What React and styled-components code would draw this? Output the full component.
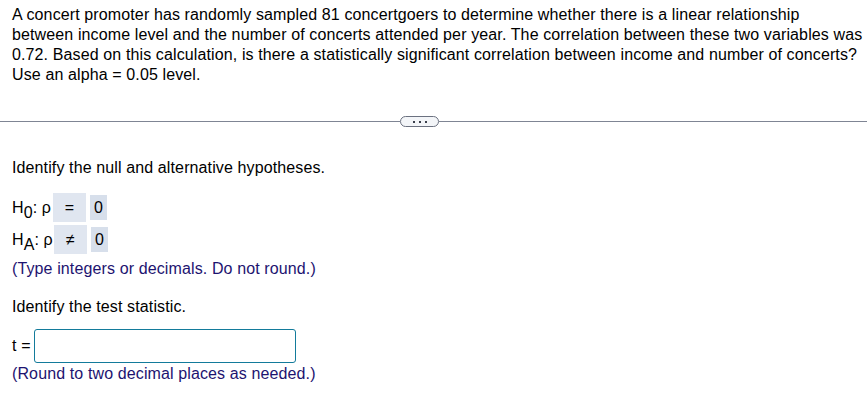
import React from "react";
import styled, { createGlobalStyle } from "styled-components";

const GlobalStyle = createGlobalStyle`
  body {
    margin: 0;
    background: #ffffff;
    font-family: "Liberation Sans", Arial, sans-serif;
    font-size: 16px;
    letter-spacing: 0.12px;
    color: #000000;
  }
`;

const Page = styled.div`
  width: 867px;
  padding-top: 5px;
`;

const Prompt = styled.p`
  margin: 0;
  padding: 0 0 0 12px;
  width: 853px;
  line-height: 20px;
`;

const Divider = styled.div`
  display: grid;
  grid-template-columns: 400px auto 1fr;
  align-items: center;
  margin-top: 31px;
  height: 11px;
`;

const Rule = styled.div`
  height: 1px;
  background: #7f8594;
`;

const MoreButton = styled.button`
  display: flex;
  align-items: center;
  justify-content: center;
  gap: 4px;
  width: 39px;
  height: 11px;
  padding: 0;
  border: 1px solid #6b7180;
  border-radius: 6px;
  background: #f3f5f8;
  cursor: pointer;
`;

const Dot = styled.span`
  width: 2px;
  height: 2px;
  background: #3a3f4b;
`;

const Body = styled.div`
  padding-left: 12px;
  line-height: 20px;
`;

const Line = styled.div`
  margin-top: ${(p) => p.$gap || 0}px;
  color: ${(p) => (p.$hint ? "#1d1370" : "#000000")};
`;

const Hypotheses = styled.div`
  display: flex;
  flex-direction: column;
  gap: 3px;
  margin-top: 15px;
`;

const HypRow = styled.div`
  display: flex;
  align-items: center;
  height: 29px;
`;

const Label = styled.span`
  display: inline-flex;
  align-items: baseline;
  width: ${(p) => p.$w}px;
  line-height: 20px;
  sub {
    font-size: 16px;
    position: relative;
    top: 5px;
    vertical-align: baseline;
    line-height: 0;
  }
`;

const OpBox = styled.span`
  display: flex;
  align-items: center;
  justify-content: center;
  width: 33px;
  height: 29px;
  background: #e0e6f0;
`;

const ValueBox = styled.span`
  display: flex;
  align-items: center;
  justify-content: center;
  width: 17px;
  height: 25px;
  margin-left: 4px;
  background: #d7dfeb;
`;

const AnswerRow = styled.div`
  display: flex;
  align-items: center;
  gap: 3px;
  margin-top: 12px;
`;

const AnswerInput = styled.input`
  box-sizing: border-box;
  width: 262px;
  height: 34px;
  border: 1px solid #137b9b;
  border-radius: 3px;
  background: #ffffff;
  font: inherit;
  padding: 0 6px;
  outline: none;
`;

const hypotheses = [
  { sub: "0", op: "=", w: 41 },
  { sub: "A", op: "≠", w: 42 },
];

export default function App() {
  return (
    <>
      <GlobalStyle />
      <Page>
        <Prompt>
          A concert promoter has randomly sampled 81 concertgoers to determine
          whether there is a linear relationship between income level and the
          number of concerts attended per year. The correlation between these
          two variables was 0.72. Based on this calculation, is there a
          statistically significant correlation between income and number of
          concerts? Use an alpha = 0.05 level.
        </Prompt>
        <Divider>
          <Rule />
          <MoreButton aria-label="more">
            <Dot />
            <Dot />
            <Dot />
          </MoreButton>
          <Rule />
        </Divider>
        <Body>
          <Line $gap={31}>Identify the null and alternative hypotheses.</Line>
          <Hypotheses>
            {hypotheses.map((h) => (
              <HypRow key={h.sub}>
                <Label $w={h.w}>
                  H<sub>{h.sub}</sub>:&nbsp;ρ
                </Label>
                <OpBox>{h.op}</OpBox>
                <ValueBox>0</ValueBox>
              </HypRow>
            ))}
          </Hypotheses>
          <Line $gap={5} $hint>
            (Type integers or decimals. Do not round.)
          </Line>
          <Line $gap={18}>Identify the test statistic.</Line>
          <AnswerRow>
            <span>t =</span>
            <AnswerInput type="text" />
          </AnswerRow>
          <Line $gap={1} $hint>
            (Round to two decimal places as needed.)
          </Line>
        </Body>
      </Page>
    </>
  );
}
